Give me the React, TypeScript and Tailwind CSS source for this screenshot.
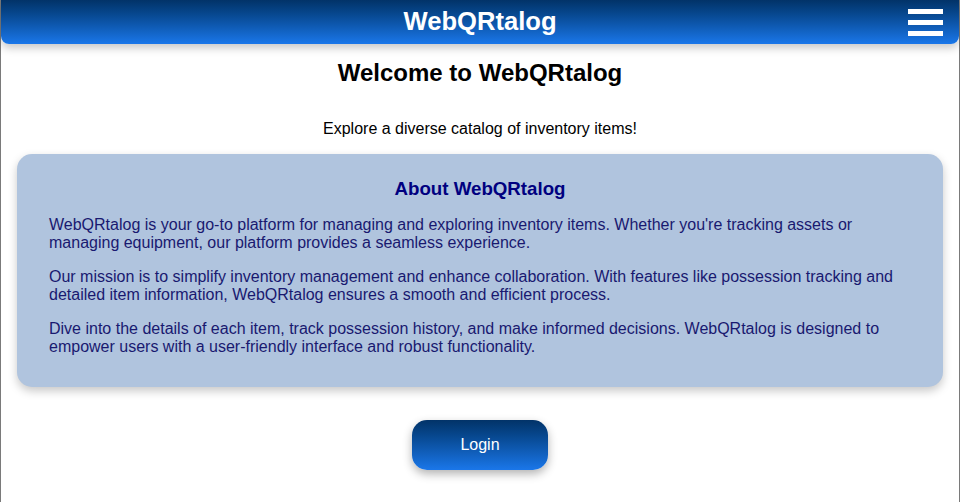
export default function App() {
  return (
    <div className="min-h-screen border-x border-[#7a7a7a] bg-white font-['Liberation_Sans',Arial,sans-serif]">
      <header className="relative flex h-[44px] items-center justify-center rounded-b-lg bg-gradient-to-b from-[#023368] to-[#1a77ea] shadow-[0_4px_8px_rgba(0,0,0,0.22)]">
        <h1 className="text-[25.6px] font-bold leading-none text-white">WebQRtalog</h1>
        <div className="absolute right-[16px] top-[9px] flex h-[27px] w-[35px] flex-col justify-between">
          <span className="block h-[5px] w-full bg-white" />
          <span className="block h-[5px] w-full bg-white" />
          <span className="block h-[5px] w-full bg-white" />
        </div>
      </header>
      <main className="flex flex-col items-center">
        <h2 className="mt-[15px] text-[24px] font-bold leading-[28px] text-black">Welcome to WebQRtalog</h2>
        <p className="mt-[33px] text-[16px] leading-[18px] text-black">Explore a diverse catalog of inventory items!</p>
        <section className="mx-[16px] mt-[16px] self-stretch rounded-[15px] bg-[#b0c4de] px-[32px] pb-[31px] pt-[24px] shadow-[0_4px_10px_rgba(0,0,0,0.22)]">
          <h3 className="text-center text-[18.72px] font-bold leading-[22px] text-[#000080]">About WebQRtalog</h3>
          <div className="mt-[16px] flex flex-col gap-[16px] text-[16px] leading-[18px] text-[#191970]">
            <p>WebQRtalog is your go-to platform for managing and exploring inventory items. Whether you're tracking assets or managing equipment, our platform provides a seamless experience.</p>
            <p>Our mission is to simplify inventory management and enhance collaboration. With features like possession tracking and detailed item information, WebQRtalog ensures a smooth and efficient process.</p>
            <p>Dive into the details of each item, track possession history, and make informed decisions. WebQRtalog is designed to empower users with a user-friendly interface and robust functionality.</p>
          </div>
        </section>
        <button className="mt-[33px] h-[50px] w-[136px] rounded-[15px] bg-gradient-to-b from-[#023368] to-[#1a77ea] text-[16px] text-white shadow-[0_4px_10px_rgba(0,0,0,0.3)]">Login</button>
      </main>
    </div>
  );
}
